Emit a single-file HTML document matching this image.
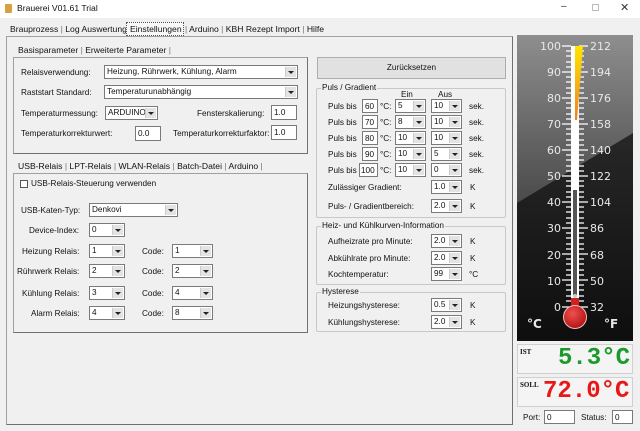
<!DOCTYPE html>
<html><head><meta charset="utf-8"><style>
*{box-sizing:border-box;margin:0;padding:0}
body{width:640px;height:431px;background:#f0f0f0;font-family:"Liberation Sans",Arial,sans-serif;font-size:8.2px;color:#111;position:relative;overflow:hidden}
.a{position:absolute;white-space:nowrap}
.cb{position:absolute;background:#fff;border:1px solid #7a7a7a;height:14px;line-height:12px;padding-left:2px;font-size:8.2px}
.cb::after{content:"";position:absolute;right:1px;top:1px;width:10px;height:10px;background:#e3e3e3;border-left:1px solid #ccc}
.cb::before{content:"";position:absolute;right:3px;top:5px;border-left:3px solid transparent;border-right:3px solid transparent;border-top:3px solid #222;z-index:2}
.tb{position:absolute;background:#fff;border:1px solid #7a7a7a;height:15px;line-height:13px;padding-left:2px;font-size:8.2px}
.panel{position:absolute;border:1px solid #a0a0a0;border-bottom-color:#707070;border-right-color:#707070}
.grp{position:absolute;border:1px solid #c8c8c8;border-radius:2px}
.gl{position:absolute;background:#f0f0f0;padding:0 1px;top:-6px;left:4px}
.tab{font-size:8.6px}
</style></head><body>
<div class="a" style="left:0;top:0;width:640px;height:18px;background:#fff"></div>
<div class="a" style="left:5px;top:4px;width:7px;height:9px;background:#d9a040;border-radius:1px"></div>
<div class="a" style="left:17px;top:3px;font-size:8.6px">Brauerei V01.61 Trial</div>
<div class="a" style="left:561px;top:1px;font-size:10px;color:#333">–</div>
<div class="a" style="left:592px;top:4px;width:7px;height:7px;border:1px solid #bbb"></div>
<div class="a" style="left:620px;top:1px;font-size:11px;color:#333">✕</div>

<div class="a tab" style="left:10px;top:24px">Brauprozess <span style="color:#777">|</span> Log Auswertung <span style="color:#777">|</span></div>
<div class="a" style="left:126px;top:22px;width:58px;height:14px;border:1px dotted #555;background:#f8f8f8"></div>
<div class="a tab" style="left:130px;top:24px">Einstellungen</div>
<div class="a tab" style="left:185px;top:24px"><span style="color:#777">|</span> Arduino <span style="color:#777">|</span> KBH Rezept Import <span style="color:#777">|</span> Hilfe</div>

<div class="panel" style="left:6px;top:36px;width:507px;height:389px"></div>

<div class="a tab" style="left:18px;top:45px">Basisparameter <span style="color:#777">|</span> Erweiterte Parameter <span style="color:#777">|</span></div>
<div class="panel" style="left:13px;top:57px;width:295px;height:97px"></div>
<div class="a" style="left:21px;top:68px">Relaisverwendung:</div>
<div class="cb" style="left:104px;top:65px;width:194px">Heizung, Rührwerk, Kühlung, Alarm</div>
<div class="a" style="left:21px;top:88px">Raststart Standard:</div>
<div class="cb" style="left:104px;top:85px;width:194px">Temperaturunabhängig</div>
<div class="a" style="left:21px;top:109px">Temperaturmessung:</div>
<div class="cb" style="left:105px;top:106px;width:53px">ARDUINO</div>
<div class="a" style="left:197px;top:109px">Fensterskalierung:</div>
<div class="tb" style="left:271px;top:105px;width:26px">1.0</div>
<div class="a" style="left:21px;top:129px">Temperaturkorrekturwert:</div>
<div class="tb" style="left:135px;top:126px;width:26px">0.0</div>
<div class="a" style="left:173px;top:129px">Temperaturkorrekturfaktor:</div>
<div class="tb" style="left:271px;top:125px;width:26px">1.0</div>

<div class="a tab" style="left:18px;top:161px">USB-Relais <span style="color:#777">|</span> LPT-Relais <span style="color:#777">|</span> WLAN-Relais <span style="color:#777">|</span> Batch-Datei <span style="color:#777">|</span> Arduino <span style="color:#777">|</span></div>
<div class="panel" style="left:13px;top:173px;width:295px;height:160px"></div>
<div class="a" style="left:20px;top:180px;width:8px;height:8px;border:1px solid #555;background:#fff"></div>
<div class="a" style="left:31px;top:179px">USB-Relais-Steuerung verwenden</div>
<div class="a" style="left:21px;top:206px">USB-Katen-Typ:</div>
<div class="cb" style="left:89px;top:203px;width:89px">Denkovi</div>
<div class="a" style="left:29px;top:226px">Device-Index:</div>
<div class="cb" style="left:89px;top:223px;width:36px">0</div>
<div class="a" style="left:22px;top:247px">Heizung Relais:</div>
<div class="cb" style="left:89px;top:244px;width:36px">1</div>
<div class="a" style="left:142px;top:247px">Code:</div>
<div class="cb" style="left:172px;top:244px;width:41px">1</div>
<div class="a" style="left:17px;top:267px">Rührwerk Relais:</div>
<div class="cb" style="left:89px;top:264px;width:36px">2</div>
<div class="a" style="left:142px;top:267px">Code:</div>
<div class="cb" style="left:172px;top:264px;width:41px">2</div>
<div class="a" style="left:22px;top:289px">Kühlung Relais:</div>
<div class="cb" style="left:89px;top:286px;width:36px">3</div>
<div class="a" style="left:142px;top:289px">Code:</div>
<div class="cb" style="left:172px;top:286px;width:41px">4</div>
<div class="a" style="left:31px;top:309px">Alarm Relais:</div>
<div class="cb" style="left:89px;top:306px;width:36px">4</div>
<div class="a" style="left:142px;top:309px">Code:</div>
<div class="cb" style="left:172px;top:306px;width:41px">8</div>

<div class="a" style="left:317px;top:57px;width:189px;height:22px;background:#e1e1e1;border:1px solid #adadad;text-align:center;line-height:20px">Zurücksetzen</div>

<div class="grp" style="left:316px;top:88px;width:190px;height:130px"><span class="gl">Puls / Gradient</span></div>
<div class="a" style="left:401px;top:90px">Ein</div>
<div class="a" style="left:438px;top:90px">Aus</div>
<div class="a" style="left:328px;top:102px">Puls bis</div><div class="tb" style="left:362px;top:99px;width:16px;height:14px">60</div><div class="a" style="left:380px;top:102px">°C:</div><div class="cb" style="left:395px;top:99px;width:31px">5</div><div class="cb" style="left:431px;top:99px;width:31px">10</div><div class="a" style="left:469px;top:102px">sek.</div>
<div class="a" style="left:328px;top:118px">Puls bis</div><div class="tb" style="left:362px;top:115px;width:16px;height:14px">70</div><div class="a" style="left:380px;top:118px">°C:</div><div class="cb" style="left:395px;top:115px;width:31px">8</div><div class="cb" style="left:431px;top:115px;width:31px">10</div><div class="a" style="left:469px;top:118px">sek.</div>
<div class="a" style="left:328px;top:134px">Puls bis</div><div class="tb" style="left:362px;top:131px;width:16px;height:14px">80</div><div class="a" style="left:380px;top:134px">°C:</div><div class="cb" style="left:395px;top:131px;width:31px">10</div><div class="cb" style="left:431px;top:131px;width:31px">10</div><div class="a" style="left:469px;top:134px">sek.</div>
<div class="a" style="left:328px;top:150px">Puls bis</div><div class="tb" style="left:362px;top:147px;width:16px;height:14px">90</div><div class="a" style="left:380px;top:150px">°C:</div><div class="cb" style="left:395px;top:147px;width:31px">10</div><div class="cb" style="left:431px;top:147px;width:31px">5</div><div class="a" style="left:469px;top:150px">sek.</div>
<div class="a" style="left:328px;top:166px">Puls bis</div><div class="tb" style="left:359px;top:163px;width:19px;height:14px;padding-left:1px">100</div><div class="a" style="left:380px;top:166px">°C:</div><div class="cb" style="left:395px;top:163px;width:31px">10</div><div class="cb" style="left:431px;top:163px;width:31px">0</div><div class="a" style="left:469px;top:166px">sek.</div>
<div class="a" style="left:328px;top:183px">Zulässiger Gradient:</div><div class="cb" style="left:431px;top:180px;width:31px">1.0</div><div class="a" style="left:470px;top:183px">K</div>
<div class="a" style="left:328px;top:202px">Puls- / Gradientbereich:</div><div class="cb" style="left:431px;top:199px;width:31px">2.0</div><div class="a" style="left:470px;top:202px">K</div>

<div class="grp" style="left:316px;top:226px;width:190px;height:59px"><span class="gl">Heiz- und Kühlkurven-Information</span></div>
<div class="a" style="left:328px;top:237px">Aufheizrate pro Minute:</div><div class="cb" style="left:431px;top:234px;width:31px">2.0</div><div class="a" style="left:470px;top:237px">K</div>
<div class="a" style="left:328px;top:254px">Abkühlrate pro Minute:</div><div class="cb" style="left:431px;top:251px;width:31px">2.0</div><div class="a" style="left:470px;top:254px">K</div>
<div class="a" style="left:328px;top:270px">Kochtemperatur:</div><div class="cb" style="left:431px;top:267px;width:31px">99</div><div class="a" style="left:469px;top:270px">°C</div>

<div class="grp" style="left:316px;top:292px;width:190px;height:40px"><span class="gl">Hysterese</span></div>
<div class="a" style="left:328px;top:301px">Heizungshysterese:</div><div class="cb" style="left:431px;top:298px;width:31px">0.5</div><div class="a" style="left:470px;top:301px">K</div>
<div class="a" style="left:328px;top:318px">Kühlungshysterese:</div><div class="cb" style="left:431px;top:315px;width:31px">2.0</div><div class="a" style="left:470px;top:318px">K</div>

<svg class="a" style="left:517px;top:35px" width="116" height="306" viewBox="0 0 116 306">
<defs>
<linearGradient id="g1" x1="0" y1="0" x2="0" y2="1"><stop offset="0" stop-color="#8e8e8e"/><stop offset="1" stop-color="#4a4a4a"/></linearGradient>
<linearGradient id="g2" x1="0" y1="0" x2="0" y2="1"><stop offset="0" stop-color="#333"/><stop offset="1" stop-color="#0e0e0e"/></linearGradient>
<linearGradient id="gy" x1="0" y1="0" x2="0" y2="1"><stop offset="0" stop-color="#ffe600"/><stop offset="1" stop-color="#f08020"/></linearGradient>
<radialGradient id="gb" cx="0.4" cy="0.35" r="0.7"><stop offset="0" stop-color="#f05050"/><stop offset="1" stop-color="#b01010"/></radialGradient>
</defs>
<rect width="116" height="306" fill="url(#g2)"/>
<polygon points="0,0 116,0 116,98 0,168" fill="url(#g1)"/>
<g fill="#e8e8e8" font-family="'DejaVu Sans',sans-serif" font-size="11">
<text x="44" y="15" text-anchor="end">100</text><text x="73" y="15">212</text>
<text x="44" y="41" text-anchor="end">90</text><text x="73" y="41">194</text>
<text x="44" y="67" text-anchor="end">80</text><text x="73" y="67">176</text>
<text x="44" y="93" text-anchor="end">70</text><text x="73" y="93">158</text>
<text x="44" y="119" text-anchor="end">60</text><text x="73" y="119">140</text>
<text x="44" y="145" text-anchor="end">50</text><text x="73" y="145">122</text>
<text x="44" y="171" text-anchor="end">40</text><text x="73" y="171">104</text>
<text x="44" y="197" text-anchor="end">30</text><text x="73" y="197">86</text>
<text x="44" y="224" text-anchor="end">20</text><text x="73" y="224">68</text>
<text x="44" y="250" text-anchor="end">10</text><text x="73" y="250">50</text>
<text x="44" y="276" text-anchor="end">0</text><text x="73" y="276">32</text>
<text x="10" y="293" font-weight="bold" font-size="12">°C</text><text x="87" y="293" font-weight="bold" font-size="12">°F</text>
</g>
<rect x="54" y="11" width="8" height="262" fill="#fff"/>
<g stroke="#fff" stroke-width="1.2">
<path d="M45 11H54M62 11H71M45 37H54M62 37H71M45 63H54M62 63H71M45 89H54M62 89H71M45 115H54M62 115H71M45 141H54M62 141H71M45 167H54M62 167H71M45 193H54M62 193H71M45 219H54M62 219H71M45 245H54M62 245H71M45 272H54M62 272H71"/>
<path d="M49 16H54M49 21H54M49 27H54M49 32H54M49 42H54M49 47H54M49 53H54M49 58H54M49 68H54M49 73H54M49 79H54M49 84H54M49 94H54M49 99H54M49 105H54M49 110H54M49 120H54M49 125H54M49 131H54M49 136H54M49 146H54M49 151H54M49 157H54M49 162H54M49 172H54M49 177H54M49 183H54M49 188H54M49 198H54M49 203H54M49 209H54M49 214H54M49 224H54M49 229H54M49 235H54M49 240H54M49 250H54M49 255H54M49 261H54M49 266H54"/>
<path d="M62 16H67M62 21H67M62 27H67M62 32H67M62 42H67M62 47H67M62 53H67M62 58H67M62 68H67M62 73H67M62 79H67M62 84H67M62 94H67M62 99H67M62 105H67M62 110H67M62 120H67M62 125H67M62 131H67M62 136H67M62 146H67M62 151H67M62 157H67M62 162H67M62 172H67M62 177H67M62 183H67M62 188H67M62 198H67M62 203H67M62 209H67M62 214H67M62 224H67M62 229H67M62 235H67M62 240H67M62 250H67M62 255H67M62 261H67M62 266H67"/>
</g>
<polygon points="58,11 66,11 60,85 58,85" fill="url(#gy)"/>
<rect x="56" y="155" width="4" height="105" fill="#555"/>
<circle cx="58" cy="261" r="2" fill="#ccc"/>
<rect x="54" y="263" width="8" height="14" fill="#d02020"/>
<circle cx="58" cy="282" r="11.5" fill="url(#gb)" stroke="#f0c0c0" stroke-width="1"/>
</svg>

<div class="a" style="left:517px;top:344px;width:116px;height:30px;border:1px solid #d0d0d0;background:#f4f4f4;overflow:hidden">
<div class="a" style="left:2px;top:3px;font-size:7px;font-weight:bold;font-family:'Liberation Serif',serif">IST</div>
<div class="a" style="left:40px;top:0px;font-size:24px;line-height:28px;font-weight:bold;color:#1a9a2a;font-family:'Liberation Mono',monospace">5.3°C</div>
</div>
<div class="a" style="left:517px;top:377px;width:116px;height:30px;border:1px solid #d0d0d0;background:#f4f4f4;overflow:hidden">
<div class="a" style="left:2px;top:3px;font-size:7px;font-weight:bold;font-family:'Liberation Serif',serif">SOLL</div>
<div class="a" style="left:25px;top:0px;font-size:24px;line-height:28px;font-weight:bold;color:#e81818;font-family:'Liberation Mono',monospace">72.0°C</div>
</div>
<div class="a" style="left:523px;top:413px">Port:</div>
<div class="tb" style="left:544px;top:410px;width:31px;height:14px">0</div>
<div class="a" style="left:581px;top:413px">Status:</div>
<div class="tb" style="left:612px;top:410px;width:21px;height:14px">0</div>
</body></html>
